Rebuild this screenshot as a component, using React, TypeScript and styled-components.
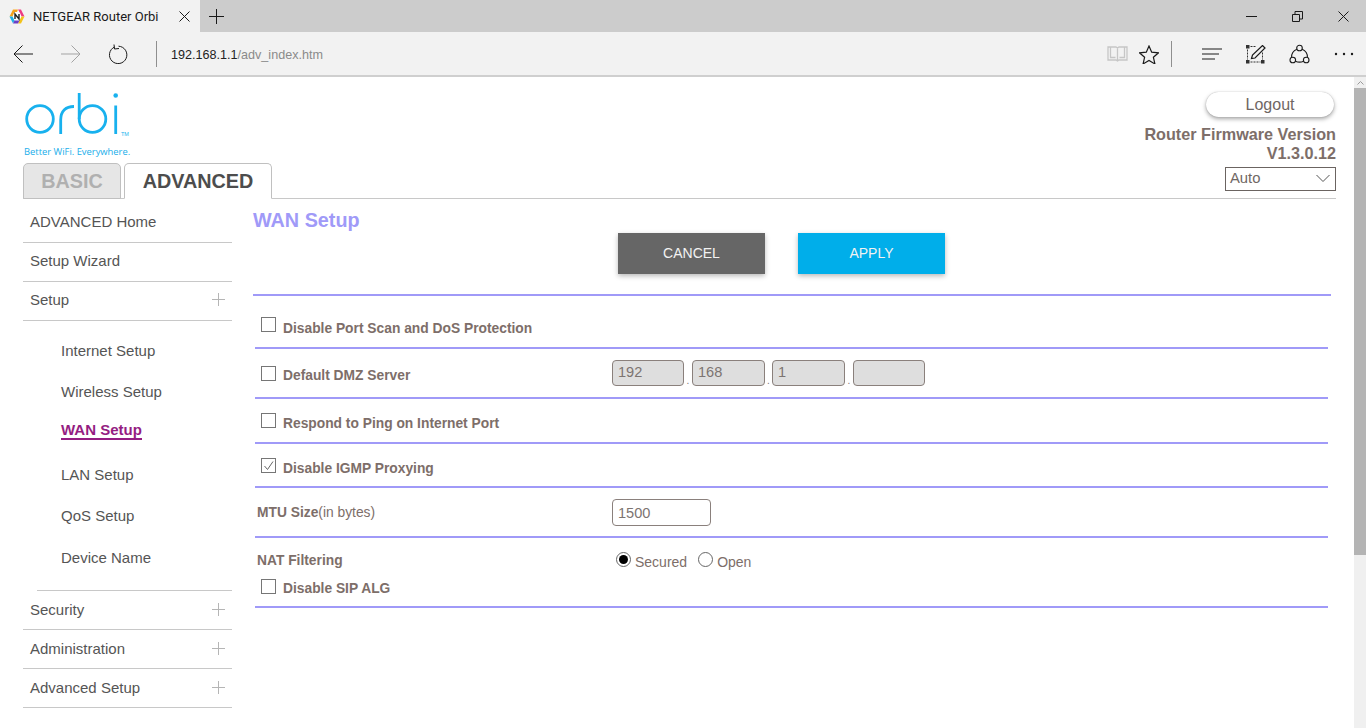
import React from "react";
import styled, { createGlobalStyle } from "styled-components";

const Global = createGlobalStyle`
  html, body { margin: 0; padding: 0; height: 728px; overflow: hidden; background: #fff; }
  body { font-family: "Liberation Sans", Arial, sans-serif; }
  * { box-sizing: border-box; }
`;

const Shell = styled.div`
  width: 1366px; height: 728px; display: flex; flex-direction: column; overflow: hidden;
`;
const TabBar = styled.div`
  height: 32px; background: #cccccc; display: flex; align-items: center; flex: none;
`;
const Tab = styled.div`
  width: 200px; height: 32px; background: #f2f2f2; display: flex; align-items: center;
  padding-left: 9px; color: #1a1a1a;
`;
const TabTitle = styled.span`
  margin-left: 8px; flex: 1; white-space: nowrap; font-family: Roboto, "Liberation Sans", sans-serif; font-size: 13px;
`;
const TabClose = styled.span`
  display: flex; margin-right: 10px;
`;
const NewTab = styled.span`
  display: flex; margin-left: 9px;
`;
const WindowControls = styled.div`
  margin-left: auto; display: flex; height: 32px;
`;
const WinBtn = styled.span`
  width: 46px; display: flex; align-items: center; justify-content: center;
`;
const Toolbar = styled.div`
  height: 45px; background: #f2f2f2; border-bottom: 2px solid #cfcfcf; display: flex; align-items: center; flex: none; padding-top: 1px;
`;
const NavIcon = styled.span<{ $w: number }>`
  width: ${(p) => p.$w}px; display: flex; justify-content: center; align-items: center; flex: none;
`;
const VSep = styled.span`
  width: 1px; height: 26px; background: #8f8f8f; flex: none;
`;
const Address = styled.div`
  margin-left: 14px; font-size: 12.6px; color: #222; flex: 1; white-space: nowrap; padding-top: 1px;
`;
const AddressPath = styled.span`
  color: #8a8a8a;
`;

const PageArea = styled.div`
  flex: 1; display: flex; min-height: 0;
`;
const Page = styled.div`
  flex: 1; padding: 0 18px 0 23px; min-width: 0;
`;
const Scrollbar = styled.div`
  width: 12px; flex: none; background: #f0f0f0; display: flex; flex-direction: column;
`;
const ScrollArrow = styled.div`
  height: 11px; display: flex; align-items: center; justify-content: center;
`;
const ScrollThumb = styled.div`
  height: 467px; background: #b4b4b4;
`;

const Header = styled.div`
  height: 122px; display: flex; justify-content: space-between; border-bottom: 1px solid #c8c8c8;
`;
const Brand = styled.div`
  display: flex; flex-direction: column; padding-top: 13px;
`;
const LogoMark = styled.svg`
  flex: none; display: block;
`;
const Tagline = styled.div`
  margin: 0 0 0 1px; height: 17px; flex: none; font-family: "Open Sans", sans-serif; font-size: 9.4px; line-height: 11px; color: #19aeea; white-space: nowrap;
`;
const Tabs = styled.div`
  display: flex; gap: 3px; flex: none;
`;
const ModeTab = styled.div<{ $active?: boolean }>`
  height: 36px; border: 1px solid #c0c0c0; border-radius: 5px 5px 0 0;
  font-size: 19.8px; font-weight: bold; display: flex; align-items: center; justify-content: center;
  width: ${(p) => (p.$active ? "148px" : "98px")};
  background: ${(p) => (p.$active ? "#fff" : "#e6e6e6")};
  color: ${(p) => (p.$active ? "#4d4d4d" : "#b0b0b0")};
  border-bottom: ${(p) => (p.$active ? "1px solid #fff" : "1px solid #c0c0c0")};
`;
const HeaderRight = styled.div`
  display: flex; flex-direction: column; align-items: flex-end; padding-top: 15px;
`;
const Logout = styled.div`
  width: 128px; height: 25px; margin-right: 2px; border-radius: 13px; background: #fff;
  box-shadow: 0 2px 4px rgba(0,0,0,.35), 0 0 1px rgba(0,0,0,.3);
  font-size: 16px; color: #6f6764; text-align: center; line-height: 26px;
`;
const Firmware = styled.div`
  margin-top: 8px; font-size: 16.2px; line-height: 19px; font-weight: bold; color: #7d6e69; text-align: right;
`;
const SelectBox = styled.div`
  margin-top: 4px; width: 111px; height: 24px; border: 1px solid #6b6461; font-size: 14.8px; color: #6f6764;
  display: flex; align-items: center; justify-content: space-between; padding: 0 5px 3px 4px;
`;

const Body = styled.div`
  display: flex;
`;
const Sidebar = styled.div`
  width: 209px; flex: none; margin-right: 21px;
`;
const MenuRow = styled.div<{ $h?: number; $nudge?: number }>`
  height: ${(p) => p.$h ?? 39}px; border-bottom: 1px solid #c8c8c8; display: flex; align-items: center; justify-content: space-between;
  padding: ${(p) => Math.max(p.$nudge ?? 0, 0) * 2}px 7px ${(p) => Math.max(-(p.$nudge ?? -1), 0) * 2}px;
  font-size: 15px; color: #555;
`;
const SubMenu = styled.div`
  margin-left: 14px; height: 270px; border-bottom: 1px solid #c8c8c8; display: flex; flex-direction: column; padding: 9px 0 0 24px;
`;
const SubItem = styled.div<{ $h: number; $active?: boolean }>`
  height: ${(p) => p.$h}px; display: flex; align-items: center; font-size: 15px;
  color: ${(p) => (p.$active ? "#941d82" : "#555")};
  font-weight: ${(p) => (p.$active ? "bold" : "normal")};
`;
const ActiveLink = styled.span`
  border-bottom: 2px solid #941d82; line-height: 16px; margin-top: 2px;
`;

const Main = styled.div`
  flex: 1; min-width: 0; padding-right: 5px;
`;
const Title = styled.div`
  height: 34px; padding-top: 9px; font-size: 19.8px; line-height: 24px; font-weight: bold; color: #a09af8;
`;
const Actions = styled.div`
  display: flex; padding-left: 365px; gap: 33px; height: 61px; align-items: flex-start;
`;
const ActionButton = styled.div<{ $bg: string }>`
  width: 147px; height: 41px; background: ${(p) => p.$bg}; color: #f2f2f2; font-size: 14px; padding-bottom: 2px;
  display: flex; align-items: center; justify-content: center; box-shadow: 0 2px 5px rgba(0,0,0,.28);
`;
const FormRow = styled.div<{ $h: number; $inset?: boolean; $pt?: number }>`
  height: ${(p) => p.$h}px; border-top: 2px solid #a09af8;
  margin: ${(p) => (p.$inset ? "0 3px 0 2px" : "0")};
  padding-top: ${(p) => p.$pt ?? 0}px;
  display: flex; align-items: center;
`;
const EndLine = styled.div`
  border-top: 2px solid #a09af8; margin: 0 3px 0 2px;
`;
const LabelCell = styled.div<{ $pad: number }>`
  width: 357px; flex: none; display: flex; align-items: center; padding-left: ${(p) => p.$pad}px;
`;
const Check = styled.span`
  width: 15px; height: 15px; border: 1px solid #767676; background: #fff; display: flex; flex: none; margin-right: 7px;
`;
const Label = styled.span`
  font-size: 13.8px; font-weight: bold; color: #7d6e69; white-space: nowrap;
`;
const CheckLabel = styled(Label)<{ $drop?: number }>`
  padding-top: ${(p) => p.$drop ?? 4}px;
`;
const NatLabel = styled(Label)`
  padding-bottom: 2px;
`;
const Unit = styled.span`
  font-weight: normal;
`;
const IpGroup = styled.div`
  display: flex; align-items: flex-end;
`;
const Octet = styled.div<{ $w?: number }>`
  width: ${(p) => p.$w ?? 72}px; height: 26px; border: 1px solid #8a807c; border-radius: 4px; background: #dedede;
  font-size: 14.6px; color: #7c7471; padding: 0 0 3px 5px; display: flex; align-items: center;
`;
const Dot = styled.span<{ $w?: number }>`
  width: ${(p) => p.$w ?? 8}px; text-align: center; font-size: 10px; line-height: 10px; color: #7c7471;
`;
const TextInput = styled.div`
  width: 99px; height: 27px; border: 1px solid #8a807c; border-radius: 4px; background: #fff;
  font-size: 14.6px; color: #7c7471; padding: 2px 0 0 5px; display: flex; align-items: center;
`;
const Radios = styled.div`
  display: flex; align-items: center; font-size: 14px; color: #7d6e69; padding-left: 4px;
`;
const Radio = styled.span`
  width: 15px; height: 15px; border-radius: 50%; border: 1px solid #666; background: #fff; margin: 0 4px 4px 0; flex: none;
  display: flex; align-items: center; justify-content: center;
`;
const RadioDot = styled.span`
  width: 9px; height: 9px; border-radius: 50%; background: #000;
`;
const RadioText = styled.span`
  margin-right: 11px; padding-top: 2px;
`;
const NatBlock = styled.div`
  height: 70px; border-top: 2px solid #a09af8; margin: 0 3px 0 2px; padding-top: 14px;
`;
const NatTop = styled.div`
  display: flex; align-items: center; height: 18px;
`;
const SipRow = styled.div`
  display: flex; align-items: center; margin-top: 7px; padding-left: 6px;
`;

const Stroke: React.FC<React.SVGProps<SVGSVGElement> & { w: number; h: number }> = ({ w, h, children, ...rest }) => (
  <svg width={w} height={h} viewBox={`0 0 ${w} ${h}`} fill="none" stroke="#1a1a1a" strokeWidth={1} {...rest}>{children}</svg>
);

const Plus = () => (
  <Stroke w={13} h={13} stroke="#b5b5b5"><path d="M6.5 0v13M0 6.5h13" /></Stroke>
);

const Favicon = () => (
  <svg width="16" height="15" viewBox="0 0 16 15">
    <path d="M4 .5h8l3.500 7-3.500 7H4L.5 7.500z" fill="#fff" />
    <path d="M4 .5h5L8 3H5.500L3.500 7.500H.5z" fill="#f5a11c" />
    <path d="M.5 7.500h3l2 4L4 14.500z" fill="#1fb0e8" />
    <path d="M9 .5h3l3.500 7h-3L11 4z" fill="#ec3b83" />
    <path d="M15.500 7.500 12 14.500H9l1.500-3 2-4z" fill="#f2c21b" />
    <path d="M4 14.500l1.500-3h5l-1.500 3z" fill="#6a3fc4" />
    <path d="M6 10V5l4 5V5" fill="none" stroke="#222" strokeWidth="1.4" />
  </svg>
);

const Logo = () => (
  <LogoMark width="110" height="56" viewBox="0 0 110 56" fill="none" stroke="#18b1ee" strokeWidth="2.8">
    <circle cx="17" cy="29" r="13.3" />
    <path d="M37.700 44V30c0-9 5.300-13.500 13.300-13.500" />
    <path d="M56.200 3V29" />
    <circle cx="69.500" cy="29" r="13.300" />
    <path d="M92.700 15.500V44" />
    <circle cx="92.700" cy="5.500" r="2.300" fill="#18b1ee" stroke="none" />
    <text x="98" y="45.500" fontFamily="Liberation Sans, sans-serif" fontSize="5.500" fill="#18b1ee" stroke="none">TM</text>
  </LogoMark>
);

export default function App() {
  return (
    <Shell>
      <Global />
      <TabBar>
        <Tab>
          <Favicon />
          <TabTitle>NETGEAR Router Orbi</TabTitle>
          <TabClose>
            <Stroke w={11} h={11}><path d="M.5.5l10 10M10.500.5l-10 10" /></Stroke>
          </TabClose>
        </Tab>
        <NewTab>
          <Stroke w={15} h={15}><path d="M7.500 0v15M0 7.500h15" /></Stroke>
        </NewTab>
        <WindowControls>
          <WinBtn><Stroke w={11} h={3}><path d="M0 1.500h11" /></Stroke></WinBtn>
          <WinBtn><Stroke w={11} h={11}><path d="M.5 3.500h7v7h-7zM3 3.500V.5h7.500v7.500H7.500" /></Stroke></WinBtn>
          <WinBtn><Stroke w={11} h={11}><path d="M.5.5l10 10M10.500.5l-10 10" /></Stroke></WinBtn>
        </WindowControls>
      </TabBar>
      <Toolbar>
        <NavIcon $w={46}><Stroke w={20} h={18}><path d="M1 9h19M9.500.5 1 9l8.500 8.500" /></Stroke></NavIcon>
        <NavIcon $w={49}><Stroke w={20} h={18} stroke="#a3a3a3"><path d="M0 9h19M10.500.5 19 9l-8.500 8.500" /></Stroke></NavIcon>
        <NavIcon $w={45}><Stroke w={20} h={20}><path d="M6.500 3a8.700 8.700 0 1 0 4-.8M6 .5l.5 4.500 4.500-.5" /></Stroke></NavIcon>
        <NavIcon $w={16} />
        <VSep />
        <Address>192.168.1.1<AddressPath>/adv_index.htm</AddressPath></Address>
        <NavIcon $w={22}><Stroke w={21} h={18} stroke="#c6c6c6" strokeWidth={1.3}><path d="M1 2h8l1.500 1L12 2h8v13h-8l-1.500 1L9 15H1zM10.500 3v13M3.500 2v10.500h5M17.500 2v10.500h-5" /></Stroke></NavIcon>
        <NavIcon $w={42}><Stroke w={20} h={19} strokeWidth={1.2}><path d="M10 1l2.700 6.200 6.800.6-5.100 4.500 1.500 6.600L10 15.500l-5.900 3.400 1.500-6.600L.5 7.800l6.800-.6z" /></Stroke></NavIcon>
        <NavIcon $w={1} />
        <VSep />
        <NavIcon $w={21} />
        <NavIcon $w={39}><Stroke w={21} h={14}><path d="M0 2h20M0 7h17M0 12h13" /></Stroke></NavIcon>
        <NavIcon $w={47}>
          <Stroke w={20} h={19}>
            <path d="M1.500 4.500v10M4.500 17h10M4.500 1.500h6M16.500 7.500v7" strokeDasharray="2 1" stroke="#333" />
            <path d="M0 0h3.500v3.500H0zM0 15h3.500v3.500H0zM15 15h3.500v3.500H15z" fill="#333" stroke="none" />
            <path d="M5.500 13.500l1-3.500L16.500.5 19 3 9 13z" strokeWidth={1.2} />
          </Stroke>
        </NavIcon>
        <NavIcon $w={41}>
          <Stroke w={21} h={20} strokeWidth={1.1}>
            <path d="M7.900 5.200A8.500 8.500 0 0 0 2.600 13.500M13.100 5.200A8.500 8.500 0 0 1 18.400 13.500M6.400 17.200Q10.500 19 14.600 17.200" />
            <circle cx="10.500" cy="4" r="2.800" />
            <circle cx="3.800" cy="16" r="2.800" />
            <circle cx="17.200" cy="16" r="2.800" />
          </Stroke>
        </NavIcon>
        <NavIcon $w={46}><svg width="22" height="4" viewBox="0 0 22 4" fill="#1a1a1a"><circle cx="4" cy="2" r="1.200" /><circle cx="12" cy="2" r="1.200" /><circle cx="20" cy="2" r="1.200" /></svg></NavIcon>
      </Toolbar>
      <PageArea>
        <Page>
          <Header>
            <Brand>
              <Logo />
              <Tagline>Better WiFi. Everywhere.</Tagline>
              <Tabs>
                <ModeTab>BASIC</ModeTab>
                <ModeTab $active>ADVANCED</ModeTab>
              </Tabs>
            </Brand>
            <HeaderRight>
              <Logout>Logout</Logout>
              <Firmware>Router Firmware Version<br />V1.3.0.12</Firmware>
              <SelectBox>Auto
                <Stroke w={14} h={8} stroke="#555"><path d="M.5 1l6.500 6.500L13.500 1" /></Stroke>
              </SelectBox>
            </HeaderRight>
          </Header>
          <Body>
            <Sidebar>
              <MenuRow $h={44} $nudge={1}>ADVANCED Home</MenuRow>
              <MenuRow $nudge={-2}>Setup Wizard</MenuRow>
              <MenuRow $nudge={-2}>Setup<Plus /></MenuRow>
              <SubMenu>
                <SubItem $h={41}>Internet Setup</SubItem>
                <SubItem $h={41}>Wireless Setup</SubItem>
                <SubItem $h={35} $active><ActiveLink>WAN Setup</ActiveLink></SubItem>
                <SubItem $h={55}>LAN Setup</SubItem>
                <SubItem $h={27}>QoS Setup</SubItem>
                <SubItem $h={57}>Device Name</SubItem>
              </SubMenu>
              <MenuRow>Security<Plus /></MenuRow>
              <MenuRow>Administration<Plus /></MenuRow>
              <MenuRow>Advanced Setup<Plus /></MenuRow>
            </Sidebar>
            <Main>
              <Title>WAN Setup</Title>
              <Actions>
                <ActionButton $bg="#666666">CANCEL</ActionButton>
                <ActionButton $bg="#00aeea">APPLY</ActionButton>
              </Actions>
              <FormRow $h={53} $pt={6}>
                <LabelCell $pad={8}><Check /><CheckLabel $drop={8}>Disable Port Scan and DoS Protection</CheckLabel></LabelCell>
              </FormRow>
              <FormRow $h={50} $inset>
                <LabelCell $pad={6}><Check /><CheckLabel>Default DMZ Server</CheckLabel></LabelCell>
                <IpGroup>
                  <Octet>192</Octet><Dot>.</Dot>
                  <Octet $w={73}>168</Octet><Dot $w={7}>.</Dot>
                  <Octet $w={73}>1</Octet><Dot>.</Dot>
                  <Octet>&nbsp;</Octet>
                </IpGroup>
              </FormRow>
              <FormRow $h={45} $inset>
                <LabelCell $pad={6}><Check /><CheckLabel $drop={6}>Respond to Ping on Internet Port</CheckLabel></LabelCell>
              </FormRow>
              <FormRow $h={44} $inset>
                <LabelCell $pad={6}><Check><Stroke w={13} h={13} stroke="#666"><path d="M2.500 7l3 3.500L11 2.500" /></Stroke></Check><CheckLabel $drop={6}>Disable IGMP Proxying</CheckLabel></LabelCell>
              </FormRow>
              <FormRow $h={50} $inset>
                <LabelCell $pad={2}><Label>MTU Size<Unit>(in bytes)</Unit></Label></LabelCell>
                <TextInput>1500</TextInput>
              </FormRow>
              <NatBlock>
                <NatTop>
                  <LabelCell $pad={2}><NatLabel>NAT Filtering</NatLabel></LabelCell>
                  <Radios>
                    <Radio><RadioDot /></Radio><RadioText>Secured</RadioText>
                    <Radio /><RadioText>Open</RadioText>
                  </Radios>
                </NatTop>
                <SipRow><Check /><CheckLabel>Disable SIP ALG</CheckLabel></SipRow>
              </NatBlock>
              <EndLine />
            </Main>
          </Body>
        </Page>
        <Scrollbar>
          <ScrollArrow><Stroke w={7} h={4} stroke="#9a9a9a"><path d="M.5 3.500l3-3 3 3" /></Stroke></ScrollArrow>
          <ScrollThumb />
        </Scrollbar>
      </PageArea>
    </Shell>
  );
}
